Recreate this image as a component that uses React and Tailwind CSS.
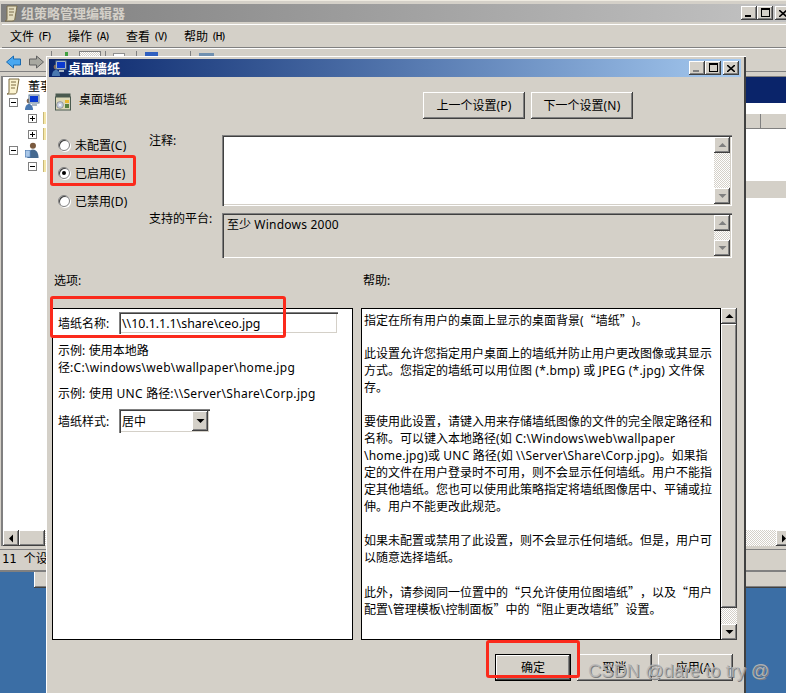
const raised = "bg-[#d4d0c8] shadow-[inset_-1px_-1px_0_#404040,inset_1px_1px_0_#ffffff,inset_-2px_-2px_0_#808080]";
const sunken = "shadow-[inset_1px_1px_0_#808080,inset_2px_2px_0_#404040,inset_-1px_-1px_0_#ffffff,inset_-2px_-2px_0_#d4d0c8]";
const checker = "bg-[repeating-conic-gradient(#d4d0c8_0_25%,#ffffff_0_50%)] bg-[length:2px_2px]";

function T({ children, wide }) {
  const parts = String(children).split(/([\x20-\x7e]+|[“”]+)/).filter(Boolean);
  return (
    <>
      {parts.map((p, i) =>
        p === "“" ? (
          <span key={i} className="inline-block w-[12px] text-right [font-family:'Noto_Sans_CJK_SC',sans-serif]">{p}</span>
        ) : p === "”" ? (
          <span key={i} className="inline-block w-[12px] text-left [font-family:'Noto_Sans_CJK_SC',sans-serif]">{p}</span>
        ) : /^[\x20-\x7e]/.test(p) ? (
          <span key={i} className={wide ? "tracking-[0.32px]" : "tracking-[0.22px]"}>{p}</span>
        ) : (
          <span key={i}>{p}</span>
        )
      )}
    </>
  );
}

function Tri({ dir, color = "#000" }) {
  const pts = { up: "0,5 8,5 4,1", down: "0,1 8,1 4,5", left: "5,0 5,8 1,4", right: "1,0 1,8 5,4" }[dir];
  const v = dir === "up" || dir === "down";
  return (
    <svg width={v ? 9 : 6} height={v ? 6 : 9} viewBox={v ? "0 0 8 6" : "0 0 6 8"}>
      <polygon points={pts} fill={color} />
    </svg>
  );
}

function SB({ children }) {
  return <div className={`${raised} w-[16px] h-[16px] shrink-0 flex items-center justify-center`}>{children}</div>;
}

function VScroll({ disabled, thumb }) {
  const c = disabled ? "#808080" : "#000";
  return (
    <div className="w-[16px] h-full flex flex-col">
      <SB><Tri dir="up" color={c} /></SB>
      {thumb ? (
        <div className="flex-1 flex flex-col">
          <div className={`${raised} flex-1`} />
          <div className={`${checker} h-[16px]`} />
        </div>
      ) : (
        <div className={`${checker} flex-1`} />
      )}
      <SB><Tri dir="down" color={c} /></SB>
    </div>
  );
}

function WinBtns({ dim }) {
  const c = dim ? "#808080" : "#000";
  return (
    <div className="flex items-center">
      <div className={`${raised} w-[16px] h-[14px] relative`}>
        <div className="absolute left-[4px] bottom-[3px] w-[6px] h-[2px]" style={{ background: c }} />
      </div>
      <div className={`${raised} w-[16px] h-[14px] flex items-start justify-center pt-[2px]`}>
        <div className="w-[9px] h-[9px] border border-black border-t-2" />
      </div>
      <div className={`${raised} w-[16px] h-[14px] ml-[2px] flex items-center justify-center`}>
        <svg width="8" height="7" viewBox="0 0 8 7"><path d="M0 0L8 7M8 0L0 7" stroke="#000" strokeWidth="1.6" /></svg>
      </div>
    </div>
  );
}

function ComputerIcon({ size = 16 }) {
  return (
    <svg width={size} height={size} viewBox="0 0 16 16">
      <circle cx="5" cy="7" r="2.4" fill="#8a6a4f" />
      <path d="M1 16c0-4 2-6 4-6s4 2 4 6z" fill="#4a78b0" />
      <rect x="5" y="1" width="10" height="8" fill="#e8e8e8" stroke="#5a7a9a" strokeWidth="1" />
      <rect x="6" y="2" width="8" height="6" fill="#0a3ad0" />
      <rect x="8" y="10" width="5" height="2" fill="#a9b6c4" />
    </svg>
  );
}

function UserIcon() {
  return (
    <svg width="16" height="16" viewBox="0 0 16 17">
      <circle cx="9" cy="4" r="3.2" fill="#7a5a3f" />
      <path d="M3 17c0-6 3-9 6-9s6 3 6 9z" fill="#46698f" />
      <rect x="1" y="9" width="5" height="7" fill="#a9c7e8" stroke="#4a78b0" strokeWidth="0.7" />
    </svg>
  );
}

function ScrollIcon() {
  return (
    <svg width="14" height="17" viewBox="0 0 14 17">
      <path d="M3 1H13L11 13C11 15 10 16 8 16H1C3 16 3 14 3 13Z" fill="#fbf3d0" stroke="#7a6a40" strokeWidth="1" />
      <path d="M5 4H10M5 7H10M5 10H9" stroke="#7a6a40" strokeWidth="1" />
    </svg>
  );
}

function Expander({ minus }) {
  return (
    <div className="w-[9px] h-[9px] border border-[#808080] bg-white relative shrink-0">
      <div className="absolute left-[1px] top-[3px] w-[5px] h-[1px] bg-black" />
      {!minus && <div className="absolute left-[3px] top-[1px] w-[1px] h-[5px] bg-black" />}
    </div>
  );
}

function TreeRow({ indent, minus, icon }) {
  return (
    <div className="h-[16px] flex items-center" style={{ paddingLeft: indent }}>
      <Expander minus={minus} />
      <div className="ml-[6px] h-[16px] flex items-center">{icon}</div>
    </div>
  );
}

const Folder = <div className="w-[3px] h-[12px] bg-[#f4e6a8] border-l border-[#c8b878]" />;

function Radio({ checked, label }) {
  return (
    <div className="h-[20px] flex items-center">
      <div className="w-[12px] h-[12px] rounded-full bg-white border border-[#808080] shadow-[inset_1px_1px_0_#404040,1px_1px_0_#ffffff] flex items-center justify-center">
        {checked && <div className="w-[4px] h-[4px] rounded-full bg-black" />}
      </div>
      <span className="ml-[5px]"><T>{label}</T></span>
    </div>
  );
}

function Btn({ w, children, dark }) {
  return (
    <div className={`${dark ? "border border-black" : ""} ${w} h-[27px] shrink-0`}>
      <div className={`${raised} w-full h-full flex items-center justify-center`}><T>{children}</T></div>
    </div>
  );
}

function Menu({ a, b }) {
  return (
    <span className="w-[40px] flex items-center whitespace-nowrap">
      <span>{a}</span>
      <span className="ml-[3px] text-[11px] [font-family:'DejaVu_Sans_Mono',monospace] tracking-[-2px]">{b}</span>
    </span>
  );
}

const helpLines = [
  "指定在所有用户的桌面上显示的桌面背景(“墙纸”)。",
  "",
  "此设置允许您指定用户桌面上的墙纸并防止用户更改图像或其显示",
  "方式。您指定的墙纸可以用位图 (*.bmp) 或 JPEG (*.jpg) 文件保",
  "存。",
  "",
  "要使用此设置，请键入用来存储墙纸图像的文件的完全限定路径和",
  "名称。可以键入本地路径(如 C:\\Windows\\web\\wallpaper",
  "\\home.jpg)或 UNC 路径(如 \\\\Server\\Share\\Corp.jpg)。如果指",
  "定的文件在用户登录时不可用，则不会显示任何墙纸。用户不能指",
  "定其他墙纸。您也可以使用此策略指定将墙纸图像居中、平铺或拉",
  "伸。用户不能更改此规范。",
  "",
  "如果未配置或禁用了此设置，则不会显示任何墙纸。但是，用户可",
  "以随意选择墙纸。",
  "",
  "此外，请参阅同一位置中的“只允许使用位图墙纸”，以及“用户",
  "配置\\管理模板\\控制面板”中的“阻止更改墙纸”设置。",
];

export default function App() {
  return (
    <div className="relative w-[786px] h-[693px] overflow-hidden bg-[#3b6ea5] text-[12px] leading-[17px] text-black [font-family:'Noto_Sans','Noto_Sans_CJK_SC',sans-serif]">
      {/* window behind */}
      <div className={`${raised} absolute left-[34px] top-[540px] w-[780px] h-[48px]`} />

      {/* main window */}
      <div className="absolute left-0 top-0 w-[800px] h-[572px] bg-[#d4d0c8] border-t border-[#eeeae0] pt-[3px] flex flex-col shadow-[inset_0_-2px_0_#808080]">
        <div className="h-[18px] mx-[1px] bg-gradient-to-r from-[#7f7f7f] to-[#c4c4c4] flex items-center pl-[3px] w-[800px]">
          <div className="opacity-80"><ScrollIcon /></div>
          <span className="ml-[3px] text-[#d4d0c8] font-bold text-[13px]">组策略管理编辑器</span>
          <div className="absolute left-[741px] top-[5px]"><WinBtns /></div>
        </div>
        <div className="h-[24px] mt-[2px] mx-[2px] border-t border-white border-b border-b-[#808080] flex items-center pl-[8px] gap-[18px]">
          <Menu a="文件" b="(F)" /><Menu a="操作" b="(A)" /><Menu a="查看" b="(V)" /><Menu a="帮助" b="(H)" />
        </div>
        <div className="h-[24px] border-t border-white border-b border-b-[#808080] flex items-start pl-[5px] pt-[2px] relative">
          <svg width="17" height="14" viewBox="0 0 16 14" className="mt-[4px]"><path d="M1 7L8 1V4H15V10H8V13Z" fill="#4aa8f0" stroke="#1a6ab0" /></svg>
          <svg width="17" height="14" viewBox="0 0 16 14" className="mt-[4px] ml-[6px]"><path d="M15 7L8 1V4H1V10H8V13Z" fill="#a8a8a0" stroke="#606060" /></svg>
          <div className="ml-[6px] w-[1px] h-[6px] bg-[#808080]" />
          <div className="ml-[13px] w-[3px] h-[4px] mt-[1px] bg-[#40a040]" />
          <div className={`${checker} ml-[11px] w-[22px] h-[7px] border border-[#808080]`} />
          <div className="ml-[4px] w-[1px] h-[6px] bg-[#808080]" />
          <div className="ml-[7px] w-[12px] h-[5px] mt-[2px] bg-white border border-[#909090]" />
          <div className="ml-[11px] w-[1px] h-[6px] bg-[#808080]" />
          <div className="ml-[8px] w-[13px] h-[6px] mt-[1px] bg-[#3060c0]" />
          <div className="ml-[32px] w-[1px] h-[6px] bg-[#808080]" />
          <div className="ml-[8px] w-[15px] h-[4px] mt-[2px] bg-[#7090b0]" />
        </div>
        <div className="flex-1 flex min-h-0 pt-[4px] relative">
          {/* tree */}
          <div className="w-[800px] h-[470px] ml-[1px] border-l-2 border-t border-[#808080] bg-white flex flex-col relative">
            <div className="pl-[3px] pt-[1px] flex items-center h-[17px] shrink-0">
              <ScrollIcon /><span className="ml-[8px]">董事</span>
            </div>
            <TreeRow indent={6} minus icon={<ComputerIcon size={16} />} />
            <TreeRow indent={25} icon={Folder} />
            <TreeRow indent={25} icon={Folder} />
            <TreeRow indent={6} minus icon={<UserIcon />} />
            <TreeRow indent={25} minus icon={Folder} />

            {/* right pane bits */}
            <div className="absolute left-[742px] top-0 w-[60px] h-[26px] bg-[#0a246a]" />
            <div className="absolute left-[742px] top-[37px] w-[60px] h-[15px] bg-[#d4d0c8] border-b border-[#808080]">
              <div className="absolute left-[15px] top-0 w-[1px] h-full bg-[#808080]" />
            </div>
            <div className="absolute left-[742px] top-[104px] w-[60px] h-[17px] bg-[#d4d0c8]" />

            {/* horizontal scrollbar */}
            <div className="mt-auto h-[16px] flex">
              <SB><Tri dir="left" /></SB>
              <div className={`${raised} w-[26px]`} />
              <div className={`${checker} flex-1`} />
              <div className="absolute left-[773px] bottom-0"><SB><Tri dir="right" /></SB></div>
            </div>
          </div>
        </div>
        <div className="h-[20px] mb-[3px] mt-[2px] border-t border-[#808080] pl-[2px] flex items-center [font-family:'DejaVu_Sans_Mono','Noto_Sans_CJK_SC',monospace] text-[12px]">
          <span>11 个设置</span>
        </div>
      </div>

      {/* dialog */}
      <div className="absolute left-[46px] top-[56px] w-[700px] h-[660px] bg-[#d4d0c8] p-[3px] shadow-[inset_1px_1px_0_#ffffff,inset_-2px_0_0_#404040]">
        <div className="h-[18px] w-[692px] bg-gradient-to-r from-[#0a246a] to-[#a6caf0] flex items-center pl-[2px] justify-between pr-[2px]">
          <div className="flex items-center">
            <ComputerIcon />
            <span className="ml-[1px] text-white font-bold text-[13px]">桌面墙纸</span>
          </div>
          <WinBtns dim />
        </div>

        {/* header */}
        <div className="h-[58px] flex items-start justify-between pr-[110px]">
          <div className="flex items-center pl-[6px] pt-[14px]">
            <svg width="16" height="18" viewBox="0 0 16 18">
              <rect x="0.5" y="0.5" width="15" height="4" fill="#4a5a50" />
              <rect x="0.5" y="4" width="15" height="13" fill="#dcd8b8" stroke="#4a5a50" />
              <circle cx="5" cy="12" r="3.4" fill="#c8d0e0" stroke="#707070" strokeWidth="0.6" />
              <circle cx="5" cy="12" r="1" fill="#fff" />
              <rect x="10" y="7" width="4" height="3" fill="#e8b830" />
              <rect x="10" y="11" width="4" height="4" fill="#5a8040" />
            </svg>
            <span className="ml-[8px] mb-[4px]">桌面墙纸</span>
          </div>
          <div className="flex gap-[6px] pt-[15px]">
            <Btn w="w-[102px]">上一个设置(P)</Btn>
            <Btn w="w-[102px]">下一个设置(N)</Btn>
          </div>
        </div>

        {/* settings */}
        <div className="flex h-[123px]">
          <div className="w-[100px] pl-[9px] flex flex-col gap-[8px]">
            <Radio label="未配置(C)" />
            <Radio checked label="已启用(E)" />
            <Radio label="已禁用(D)" />
          </div>
          <div className="flex flex-col gap-[7px]">
            <div className="flex h-[71px]">
              <div className="w-[73px] leading-[12px]">注释:</div>
              <div className={`w-[510px] bg-white relative flex justify-end p-[2px] ${sunken}`}>
                <VScroll disabled />
              </div>
            </div>
            <div className="flex h-[45px]">
              <div className="w-[73px] leading-[12px]">支持的平台:</div>
              <div className={`w-[510px] relative flex justify-between p-[2px] pl-[5px] ${sunken}`}>
                <span className="pt-[1px]"><T>至少 Windows 2000</T></span>
                <VScroll disabled />
              </div>
            </div>
          </div>
        </div>

        {/* section labels */}
        <div className="h-[50px] flex pt-[14px] pl-[5px]">
          <div className="w-[309px]">选项:</div>
          <div>帮助:</div>
        </div>

        {/* panels */}
        <div className="flex pl-[3px] h-[332px]">
          <div className="w-[301px] border border-black bg-white pl-[5px] pt-[3px]">
            <div className="flex items-center h-[22px]">
              <span className="w-[61px]">墙纸名称:</span>
              <div className={`w-[219px] h-[22px] flex items-center pl-[3px] ${sunken} text-[12.4px]`}>\\10.1.1.1\share\ceo.jpg</div>
            </div>
            <div className="mt-[8px] whitespace-nowrap"><T>示例: 使用本地路</T><br /><T wide>{"径:C:\\windows\\web\\wallpaper\\home.jpg"}</T></div>
            <div className="mt-[9px] whitespace-nowrap"><T wide>{"示例: 使用 UNC 路径:\\\\Server\\Share\\Corp.jpg"}</T></div>
            <div className="flex items-center h-[24px] mt-[7px]">
              <span className="w-[61px]">墙纸样式:</span>
              <div className={`w-[91px] h-[24px] flex items-center justify-between p-[2px] pl-[3px] ${sunken}`}>
                <span>居中</span>
                <div className={`${raised} w-[16px] h-[20px] flex items-center justify-center`}><Tri dir="down" /></div>
              </div>
            </div>
          </div>
          <div className="ml-[8px] w-[360px] border border-black bg-white pl-[2px] pt-[2px]">
            {helpLines.map((l, i) => (
              <div key={i} className="h-[17px] whitespace-nowrap"><T>{l}</T></div>
            ))}
          </div>
          <VScroll thumb />
        </div>

        {/* footer */}
        <div className="flex pl-[446px] gap-[6px] pt-[14px]">
          <Btn w="w-[76px]" dark>确定</Btn>
          <Btn w="w-[75px]">取消</Btn>
          <Btn w="w-[75px]">应用(A)</Btn>
        </div>
      </div>

      {/* annotations */}
      <div className="absolute left-[50px] top-[155px] w-[86px] h-[31px] border-[3px] border-[#fb2a1c] rounded-[3px]" />
      <div className="absolute left-[50px] top-[296px] w-[236px] h-[42px] border-[3px] border-[#fb2a1c] rounded-[3px]" />
      <div className="absolute left-[486px] top-[640px] w-[94px] h-[38px] border-[3px] border-[#fb2a1c] rounded-[3px]" />

      {/* watermark */}
      <div className="absolute left-[588px] top-[659px] text-[18.3px] leading-[24px] text-[#b8b8b8]/90 whitespace-nowrap [font-family:'Liberation_Sans',sans-serif] [text-shadow:1px_1px_0_#808080]">CSDN @dare to try @</div>
    </div>
  );
}
